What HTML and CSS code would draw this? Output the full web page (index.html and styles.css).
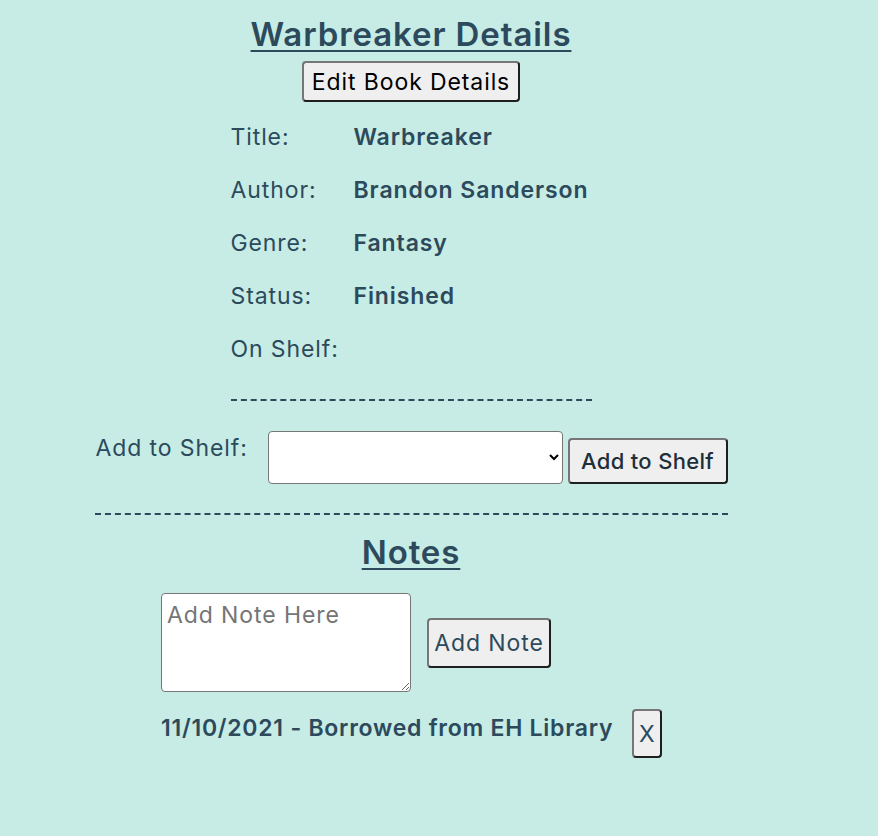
FILE: index.html
```html
<!DOCTYPE html>
<html>
<head>
<meta charset="utf-8">
<link rel="stylesheet" href="styles.css">
</head>
<body>
<main class="page">
  <h1 class="heading">Warbreaker Details</h1>
  <button class="btn edit-btn">Edit Book Details</button>
  <table class="details">
    <tr><td class="label">Title:</td><td class="value">Warbreaker</td></tr>
    <tr><td class="label">Author:</td><td class="value">Brandon Sanderson</td></tr>
    <tr><td class="label">Genre:</td><td class="value">Fantasy</td></tr>
    <tr><td class="label">Status:</td><td class="value">Finished</td></tr>
    <tr><td class="label">On Shelf:</td><td class="value"></td></tr>
  </table>
  <div class="rule rule-short"></div>
  <div class="shelf-row">
    <label class="shelf-label">Add to Shelf:</label>
    <select class="shelf-select"><option></option></select>
    <button class="btn shelf-btn">Add to Shelf</button>
  </div>
  <div class="rule rule-long"></div>
  <h2 class="heading notes-heading">Notes</h2>
  <section class="notes">
    <div class="note-form">
      <textarea class="note-input" placeholder="Add Note Here"></textarea>
      <button class="btn note-btn">Add Note</button>
    </div>
    <div class="note">
      <span class="note-text">11/10/2021 - Borrowed from EH Library</span>
      <button class="btn del-btn">X</button>
    </div>
  </section>
</main>
</body>
</html>
```

FILE: styles.css
```css
html, body {
  margin: 0;
  padding: 0;
  background: #c6ece5;
}
body {
  font-family: "Inter", "DejaVu Sans", sans-serif;
  color: #2c4a5c;
  letter-spacing: 0.9px;
}
.page {
  width: 822px;
  display: flex;
  flex-direction: column;
  align-items: center;
}
.heading {
  font-size: 33px;
  font-weight: 600;
  text-decoration: underline;
  text-decoration-thickness: 2px;
  text-underline-offset: 4px;
  margin: 14px 0 0 0;
  line-height: 40px;
}
.btn {
  font-family: inherit;
  font-size: 23px;
  letter-spacing: 0.9px;
  background: #efefef;
  border: 2px solid #767676;
  border-right-color: #1f1f1f;
  border-bottom-color: #1f1f1f;
  border-radius: 4px;
  padding: 0;
}
.edit-btn {
  color: #000;
  height: 41px;
  width: 218px;
  margin-top: 7px;
}
.details {
  width: 361px;
  border-collapse: collapse;
  font-size: 23px;
  margin-top: 8px;
}
.details td {
  height: 53px;
  padding: 0;
}
.label {
  width: 123px;
}
.value {
  font-weight: 600;
}
.rule {
  border-top: 2px dashed #2c4a5c;
  height: 0;
}
.rule-short {
  width: 361px;
  margin-top: 24px;
}
.rule-long {
  width: 633px;
  margin-top: 0;
}
.shelf-row {
  width: 633px;
  display: flex;
  align-items: flex-start;
  margin-top: 30px;
  margin-bottom: 29px;
}
.shelf-label {
  font-size: 23px;
  margin: 3px 0 0 1px;
  width: 172px;
}
.shelf-select {
  width: 295px;
  height: 53px;
  border: 1px solid #767676;
  border-radius: 4px;
  background: #fff;
  margin-right: 5px;
}
.shelf-btn {
  margin-top: 7px;
  height: 46px;
  width: 160px;
  font-size: 22px;
  letter-spacing: 0.3px;
  font-weight: 500;
  color: #1f2f3a;
}
.notes-heading {
  margin-top: 17px;
}
.notes {
  width: 500px;
  margin-top: 21px;
}
.note-form {
  display: flex;
  align-items: center;
}
.note-input {
  width: 250px;
  height: 99px;
  box-sizing: border-box;
  font-family: inherit;
  font-size: 23px;
  letter-spacing: 0.9px;
  border: 1px solid #767676;
  border-radius: 4px;
  padding: 7px 5px;
  resize: both;
  margin: 0;
}
.note-input::placeholder {
  color: #757575;
}
.note-btn {
  margin-left: 16px;
  width: 124px;
  height: 50px;
  color: #2c4a5c;
}
.note {
  display: flex;
  align-items: center;
  margin-top: 5px;
}
.note-text {
  font-size: 23px;
  font-weight: 600;
  letter-spacing: 0.75px;
  white-space: nowrap;
  margin-right: 19px;
}
.del-btn {
  width: 30px;
  height: 49px;
  flex-shrink: 0;
  color: #2c4a5c;
  margin-top: 12px;
}
```
